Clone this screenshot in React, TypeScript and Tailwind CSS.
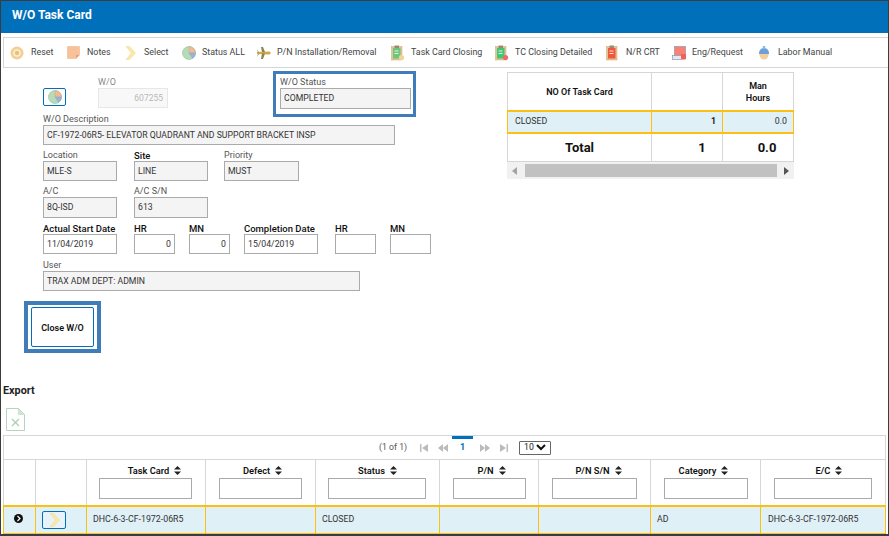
import React from "react";

const Pie = ({ size = 14 }: { size?: number }) => (
  <svg width={size} height={size} viewBox="0 0 14 14">
    <circle cx="7" cy="7" r="6.5" fill="#b5dbb8" stroke="#8fbf96" strokeWidth="0.6" />
    <path d="M7 7V.5A6.500 6.500 0 0 1 13.500 7z" fill="#f6b98f" stroke="#9a9a9a" strokeWidth="0.3" />
    <path d="M7 7h6.500A6.500 6.500 0 0 1 10.500 12.500z" fill="#93b5e6" stroke="#9a9a9a" strokeWidth="0.3" />
  </svg>
);
const Clip = ({ sheet, seal }: { sheet: string; seal?: string }) => (
  <svg width="14" height="16" viewBox="0 0 14 16">
    <rect x="0.5" y="1.5" width="10.5" height="13.5" fill="#e3c497" stroke="#cfa877" strokeWidth="0.5" />
    <rect x="2" y="3" width="7.5" height="10.5" fill={sheet} />
    <rect x="3.5" y="0.5" width="4.5" height="2.5" fill="#9a8a70" />
    <rect x="3.5" y="5.5" width="4" height="1" fill="#fff" opacity=".8" />
    <rect x="3.5" y="8" width="4" height="1" fill="#fff" opacity=".8" />
    {seal && <circle cx="10.5" cy="12.5" r="2.6" fill={seal} />}
  </svg>
);
const Chevron = () => (
  <svg width="11" height="14" viewBox="0 0 11 14">
    <path d="M1 .5h3.5L10.500 7l-6 6.500H1L6.500 7z" fill="#fbe7a6" stroke="#f3d88a" strokeWidth="0.5" />
  </svg>
);

const tools = [
  { label: "Reset", cls: "w-[57px]", icon: (
    <svg width="14" height="14" viewBox="0 0 14 14"><circle cx="7" cy="7" r="6.500" fill="#f3cf94" /><circle cx="7" cy="7" r="3.800" fill="#fbeed2" /><circle cx="7" cy="7" r="2.200" fill="#ecc07c" /></svg>
  ), gap: "w-[21px]" },
  { label: "Notes", cls: "w-[58px]", icon: (
    <svg width="13" height="13" viewBox="0 0 13 13"><path d="M.500.500h12v8.500l-3.500 3.500H.500z" fill="#f8c198" stroke="#efb083" strokeWidth="0.5" /><path d="M9 12.500V9h3.500z" fill="#e3a277" /></svg>
  ), gap: "w-[20px]" },
  { label: "Select", cls: "w-[57px]", icon: <Chevron />, gap: "w-[19px]" },
  { label: "Status ALL", cls: "w-[75px]", icon: <Pie />, gap: "w-[20px]" },
  { label: "P/N Installation/Removal", cls: "w-[134px]", icon: (
    <svg width="14" height="14" viewBox="0 0 14 14"><path d="M0 6l12.500-.5 1.500 1.500-1.500 1.500L0 8z" fill="#c9ac45" /><path d="M4 1l2 0 2 5H5zM4 13l2 0 2-5.500H5z" fill="#8f8150" /><path d="M0 3l2 3.500H1zM0 11l2-3H1z" fill="#8f8150" /></svg>
  ), gap: "w-[20px]" },
  { label: "Task Card Closing", cls: "w-[104px]", icon: <Clip sheet="#6cc77b" seal="#f2d39c" />, gap: "w-[20px]" },
  { label: "TC Closing Detailed", cls: "w-[111px]", icon: <Clip sheet="#42c672" seal="#ee6a6a" />, gap: "w-[20px]" },
  { label: "N/R CRT", cls: "w-[66px]", icon: <Clip sheet="#f0583c" />, gap: "w-[20px]" },
  { label: "Eng/Request", cls: "w-[86px]", icon: (
    <svg width="15" height="14" viewBox="0 0 15 14"><rect x="2.500" y="0.500" width="11" height="11" fill="#fa7f74" stroke="#8b9bb0" strokeWidth="0.7" /><rect x="0.500" y="9.500" width="9" height="4" fill="#e4e8ef" stroke="#8b9bb0" strokeWidth="0.7" /><rect x="9" y="8" width="5" height="5.500" rx="1" fill="#f0605c" /></svg>
  ), gap: "w-[20px]" },
  { label: "Labor Manual", cls: "w-[90px]", icon: (
    <svg width="12" height="15" viewBox="0 0 12 15"><circle cx="6" cy="10" r="4.500" fill="#f3cf9b" /><path d="M1 8a5 5 0 0 1 10 0v1H1z" fill="#6f9fd8" /><rect x="4.800" y="1" width="2.400" height="3" fill="#8fb6e6" /></svg>
  ), gap: "w-[20px]" },
];

const Label = ({ children, bold, w }: { children: React.ReactNode; bold?: boolean; w: string }) => (
  <div className={`${w} h-[12px] leading-[13px] whitespace-nowrap ${bold ? "text-[9.500px] font-medium text-[#111]" : "text-[9px] text-[#555]"}`}>{children}</div>
);

const Box = ({ value, w, h = "h-[20px]", ro = true, right = false }: { value?: string; w: string; h?: string; ro?: boolean; right?: boolean }) => (
  <div className={`${w} ${h} border border-[#aaaaaa] flex items-center px-[3px] pt-[1px] text-[8.700px] text-[#333] whitespace-nowrap ${ro ? "bg-[#f4f4f4]" : "bg-white"} ${right ? "justify-end" : ""}`}>{value}</div>
);

const Field = ({ label, value, w, h, ro = true, bold, right }: { label: string; value?: string; w: string; h?: string; ro?: boolean; bold?: boolean; right?: boolean }) => (
  <div className={`${w} shrink-0`}>
    <Label w={w} bold={bold}>{label}</Label>
    <Box w={w} h={h} value={value} ro={ro} right={right} />
  </div>
);

const Sort = () => (
  <svg width="7" height="9" viewBox="0 0 7 9" className="inline-block ml-[5px] mb-[3px]"><path d="M3.500 0L7 3.500H0zM3.500 9L0 5.500h7z" fill="#222" /></svg>
);

const cols = [
  { w: "w-[32px]" }, { w: "w-[51px]" },
  { w: "w-[119px]", t: "Task Card", i: "w-[93px] mr-[2px]", o: "pl-[17px]" },
  { w: "w-[110px]", t: "Defect", i: "w-[83px]", o: "pl-[4px]" },
  { w: "w-[124px]", t: "Status", i: "w-[98px] mr-[2px]", o: "" },
  { w: "w-[99px]", t: "P/N", i: "w-[73px]", o: "pl-[5px]" },
  { w: "w-[112px]", t: "P/N S/N", i: "w-[85px]", o: "pl-[8px]" },
  { w: "w-[110px]", t: "Category", i: "w-[84px]", o: "pr-[4px]" },
  { w: "w-[125px]", t: "E/C", i: "w-[98px]", o: "pl-[12px]" },
];

export default function App() {
  return (
    <div className="w-[889px] h-[536px] overflow-hidden bg-white border border-b-2 border-[#3c3c3c] font-['Roboto','Noto_Sans',sans-serif] text-[#333]">
      <div className="h-[32px] bg-[#0070bb] pl-[11px] flex items-center pb-[5px] text-[12px] font-bold text-white">W/O Task Card</div>

      <div className="ml-[2px] mt-[4px] h-[31px] border-y border-l border-[#d6d6d6] flex items-center pl-[6px] text-[8.900px] text-[#444]">
        {tools.map((t) => (
          <div key={t.label} className={`${t.cls} shrink-0 flex items-center whitespace-nowrap`}>
            <div className={`${t.gap} shrink-0 flex items-center`}>{t.icon}</div>
            <span>{t.label}</span>
          </div>
        ))}
      </div>

      <div className="flex">
        <div className="w-[506px] shrink-0 pl-[42px] pt-[3px]">
          <div className="h-[42px] flex items-start">
            <div className="mt-[17px] w-[23px] h-[18px] border border-[#0070bb] rounded-[2px] flex items-center justify-center shrink-0"><Pie /></div>
            <div className="ml-[32px] mt-[5px] shrink-0 opacity-70">
              <Label w="w-[70px]">W/O</Label>
              <div className="w-[70px] h-[20px] border border-[#dddddd] bg-[#f6f6f6] flex items-center justify-end px-[4px] text-[8.500px] text-[#999]">607255</div>
            </div>
            <div className="ml-[105px] shrink-0 w-[143px] h-[46px] border-[3px] border-[#3f7cb8] pl-[4px] pt-[2px]">
              <Label w="w-[130px]">W/O Status</Label>
              <Box w="w-[131px]" h="h-[21px]" value="COMPLETED" />
            </div>
          </div>
          <Field label="W/O Description" value="CF-1972-06R5- ELEVATOR QUADRANT AND SUPPORT BRACKET INSP" w="w-[352px]" />
          <div className="mt-[4px] flex gap-[17px]">
            <Field label="Location" value="MLE-S" w="w-[74px]" />
            <Field label="Site" value="LINE" w="w-[74px]" bold />
            <div className="-ml-[1px]"><Field label="Priority" value="MUST" w="w-[75px]" /></div>
          </div>
          <div className="mt-[4px] flex gap-[17px]">
            <Field label="A/C" value="8Q-ISD" w="w-[74px]" h="h-[21px]" />
            <Field label="A/C S/N" value="613" w="w-[74px]" h="h-[21px]" />
          </div>
          <div className="mt-[4px] flex">
            <Field label="Actual Start Date" value="11/04/2019" w="w-[74px]" ro={false} bold />
            <div className="ml-[17px]"><Field label="HR" value="0" w="w-[41px]" ro={false} bold right /></div>
            <div className="ml-[14px]"><Field label="MN" value="0" w="w-[41px]" ro={false} bold right /></div>
            <div className="ml-[14px]"><Field label="Completion Date" value="15/04/2019" w="w-[74px]" ro={false} bold /></div>
            <div className="ml-[17px]"><Field label="HR" w="w-[41px]" ro={false} bold /></div>
            <div className="ml-[14px]"><Field label="MN" w="w-[41px]" ro={false} bold /></div>
          </div>
          <div className="mt-[5px]"><Field label="User" value="TRAX ADM DEPT: ADMIN" w="w-[317px]" /></div>
          <div className="-ml-[19px] mt-[10px] w-[77px] h-[52px] border-[4px] border-[#3f7cb8] flex items-center justify-center">
            <div className="w-[63px] h-[40px] border border-[#0070bb] rounded-[2px] flex items-center justify-center text-[9px] font-semibold text-[#111] whitespace-nowrap pt-[3px]">Close W/O</div>
          </div>
        </div>

        <div className="w-[287px] shrink-0 pt-[4px]">
          <table className="table-fixed border-collapse w-[286px] text-[9px]">
            <colgroup><col className="w-[144px]" /><col className="w-[71px]" /><col className="w-[71px]" /></colgroup>
            <tbody>
              <tr className="h-[38px] font-semibold text-[#111] text-center leading-[12px]">
                <td className="border border-[#d6d6d6] pt-[1px]">NO Of Task Card</td>
                <td className="border border-[#d6d6d6]"></td>
                <td className="border border-[#d6d6d6] pt-[1px]">Man<br />Hours</td>
              </tr>
              <tr className="h-[22px] bg-[#e0f0f7] text-[8.800px]">
                <td className="border border-y-2 border-[#fcbf12] pl-[7px]">CLOSED</td>
                <td className="border border-y-2 border-[#fcbf12] text-right pr-[6px] font-bold text-[#222]">1</td>
                <td className="border border-y-2 border-[#fcbf12] text-right pr-[6px]">0.0</td>
              </tr>
              <tr className="h-[29px] font-bold text-[#111] text-[13px] text-center">
                <td className="border border-[#d6d6d6]">Total</td>
                <td className="border border-[#d6d6d6] pl-[30px]">1</td>
                <td className="border border-[#d6d6d6] pl-[18px]">0.0</td>
              </tr>
            </tbody>
          </table>
          <div className="w-[287px] h-[17px] bg-[#f1f1f1] flex items-center justify-between px-[5px]">
            <svg width="5" height="8" viewBox="0 0 5 8"><path d="M5 0v8L0 4z" fill="#a3a3a3" /></svg>
            <div className="w-[252px] h-[13px] bg-[#c1c1c1]" />
            <svg width="5" height="8" viewBox="0 0 5 8"><path d="M0 0v8l5-4z" fill="#555" /></svg>
          </div>
        </div>
      </div>

      <div className="mt-[31px] ml-[2px] h-[14px] leading-[14px] text-[10.800px] font-bold text-[#222]">Export</div>
      <div className="ml-[5px] mt-[10px] h-[27px]">
        <svg width="19" height="23" viewBox="0 0 19 23">
          <path d="M.500.500h12l6 6v16h-18z" fill="#fff" stroke="#b5d5bf" strokeWidth="1" />
          <path d="M12.500.500v6h6z" fill="#cfe5d6" stroke="#b5d5bf" strokeWidth="0.500" />
          <path d="M6 11l7 7M13 11l-7 7" stroke="#a9cdb4" strokeWidth="1.200" />
        </svg>
      </div>

      <div className="ml-[2px] w-[883px]">
        <div className="h-[24px] border border-b-0 border-[#d6d6d6] flex items-center relative text-[8.700px]">
          <span className="ml-[375px] text-[#555]">(1 of 1)</span>
          <svg className="ml-[13px]" width="8" height="8" viewBox="0 0 8 8"><path d="M0 0h1.500v8H0zM8 0v8L2 4z" fill="#bbb" /></svg>
          <svg className="ml-[10px]" width="10" height="8" viewBox="0 0 10 8"><path d="M5 0v8L0 4zM10 0v8L5 4z" fill="#bbb" /></svg>
          <div className="ml-[4px] w-[21px] h-[24px] relative flex items-center justify-center font-bold text-[#0070bb] text-[9px]">
            <div className="absolute top-0 left-0 w-[21px] h-[3px] bg-[#0070bb]" />1
          </div>
          <svg className="ml-[7px]" width="10" height="8" viewBox="0 0 10 8"><path d="M0 0v8l5-4zM5 0v8l5-4z" fill="#bbb" /></svg>
          <svg className="ml-[10px]" width="8" height="8" viewBox="0 0 8 8"><path d="M0 0v8l6-4zM6.500 0H8v8H6.500z" fill="#bbb" /></svg>
          <div className="ml-[11px] w-[32px] h-[14px] border border-[#666] rounded-[1px] flex items-center justify-between px-[4px] text-[8.700px] text-[#222]">
            10
            <svg width="10" height="7" viewBox="0 0 10 7"><path d="M1 1l4 4 4-4" fill="none" stroke="#111" strokeWidth="2" /></svg>
          </div>
        </div>
        <table className="table-fixed border-collapse w-[883px] text-[8.800px]">
          <colgroup>{cols.map((c, i) => <col key={i} className={c.w} />)}</colgroup>
          <tbody>
            <tr className="h-[46px]">
              {cols.map((c, i) => (
                <td key={i} className="border border-[#d6d6d6] align-top text-center">
                  {c.t && (
                    <div className="flex flex-col items-center pt-[4px]">
                      <div className={`${c.o} h-[14px] leading-[14px] text-[9.300px] font-semibold text-[#111] whitespace-nowrap`}>{c.t}<Sort /></div>
                      <div className={`${c.i} h-[21px] border border-[#aaaaaa] bg-white`} />
                    </div>
                  )}
                </td>
              ))}
            </tr>
            <tr className="h-[28px] bg-[#e0f0f7] border-y-2 border-[#fcbf12]">
              <td className="border border-y-2 border-[#fcbf12] text-center pr-[3px]">
                <svg className="inline-block mb-[3px]" width="9" height="9" viewBox="0 0 9 9"><circle cx="4.500" cy="4.500" r="4.500" fill="#111" /><path d="M3.500 2l2.500 2.500L3.500 7" fill="none" stroke="#fff" strokeWidth="1.200" /></svg>
              </td>
              <td className="border border-y-2 border-[#fcbf12] text-center">
                <div className="ml-[6px] w-[24px] h-[18px] border border-[#0070bb] rounded-[2px] flex items-center justify-center bg-[#e8f3f9]"><Chevron /></div>
              </td>
              <td className="border border-y-2 border-[#fcbf12] pl-[6px] whitespace-nowrap">DHC-6-3-CF-1972-06R5</td>
              <td className="border border-y-2 border-[#fcbf12]"></td>
              <td className="border border-y-2 border-[#fcbf12] pl-[6px]">CLOSED</td>
              <td className="border border-y-2 border-[#fcbf12]"></td>
              <td className="border border-y-2 border-[#fcbf12]"></td>
              <td className="border border-y-2 border-[#fcbf12] pl-[6px]">AD</td>
              <td className="border border-y-2 border-[#fcbf12] pl-[7px] whitespace-nowrap">DHC-6-3-CF-1972-06R5</td>
            </tr>
          </tbody>
        </table>
      </div>
    </div>
  );
}
